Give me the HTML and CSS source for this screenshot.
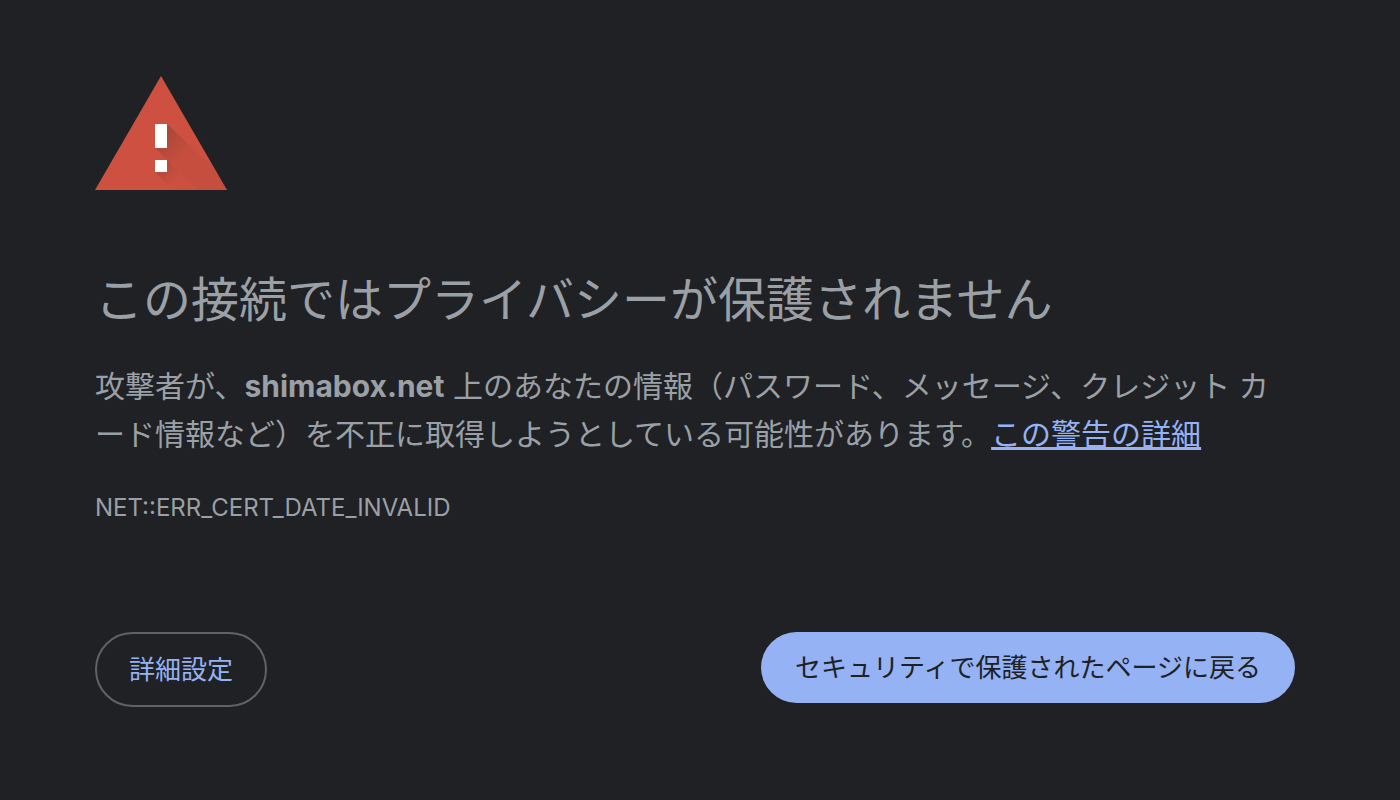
FILE: index.html
```html
<!DOCTYPE html>
<html lang="ja">

<head>
  <meta charset="UTF-8">
  <meta name="viewport" content="width=device-width, initial-scale=1.0">
  <title>プライバシー エラー</title>
  <link rel="stylesheet" href="styles.css">
</head>

<body>
  <main class="interstitial">
    <svg class="icon" viewBox="0 0 132 114" aria-hidden="true">
      <defs>
        <linearGradient id="bar-shadow" x1="66" y1="60" x2="86" y2="80" gradientUnits="userSpaceOnUse">
          <stop offset="0" stop-color="#3e2723" stop-opacity="0.24" />
          <stop offset="1" stop-color="#3e2723" stop-opacity="0.05" />
        </linearGradient>
        <linearGradient id="dot-shadow" x1="66" y1="90" x2="80" y2="104" gradientUnits="userSpaceOnUse">
          <stop offset="0" stop-color="#3e2723" stop-opacity="0.2" />
          <stop offset="1" stop-color="#3e2723" stop-opacity="0.01" />
        </linearGradient>
      </defs>
      <path fill="#cd5040" d="M66 0 132 114H0z" />
      <path fill="url(#bar-shadow)" d="M72 48 118 91 132 114H102L60 72z" />
      <path fill="url(#dot-shadow)" d="M72 84 102 114H78L60 96z" />
      <path fill="#fff" d="M60 48h12v24H60zM60 84h12v12H60z" />
    </svg>
    <h1>この接続ではプライバシーが保護されません</h1>
    <p class="message">攻撃者が、<strong>shimabox.net</strong> 上のあなたの情報（パスワード、メッセージ、クレジット カード情報など）を不正に取得しようとしている可能性があります。<a href="#">この警告の詳細</a></p>
    <div class="error-code">NET::ERR_CERT_DATE_INVALID</div>
    <div class="buttons">
      <button class="details-button" type="button">詳細設定</button>
      <button class="primary-button" type="button">セキュリティで保護されたページに戻る</button>
    </div>
  </main>
</body>

</html>
```
FILE: styles.css
```css
body {
  margin: 0;
  background-color: #202124;
  color: #9aa0a6;
  font-family: Inter, "Noto Sans CJK JP", sans-serif;
  font-size: 30px;
  line-height: 48px;
}

.interstitial {
  max-width: 1200px;
  margin: 0 auto;
  padding: 76px 105px 0 95px;
}

.icon {
  display: block;
  width: 132px;
  height: 114px;
}

h1 {
  margin: 80px 0 32px;
  font-size: 48px;
  font-weight: 400;
  line-height: 60px;
}

.message {
  margin: 0;
}

a {
  color: #94b2f4;
  text-decoration-thickness: 3px;
  text-decoration-skip-ink: none;
}

.error-code {
  margin-top: 32px;
  font-size: 24px;
  line-height: 36px;
}

.buttons {
  display: flex;
  justify-content: space-between;
  align-items: flex-start;
  margin-top: 106px;
}

button {
  font-family: inherit;
  font-size: 26px;
  line-height: 39px;
  border-radius: 40px;
  cursor: pointer;
}

.details-button {
  padding: 16px 32px;
  border: 2px solid #5f6368;
  background-color: transparent;
  color: #94b2f4;
}

.primary-button {
  padding: 16px 34px;
  border: 0;
  background-color: #94b2f4;
  color: #202124;
}
```
